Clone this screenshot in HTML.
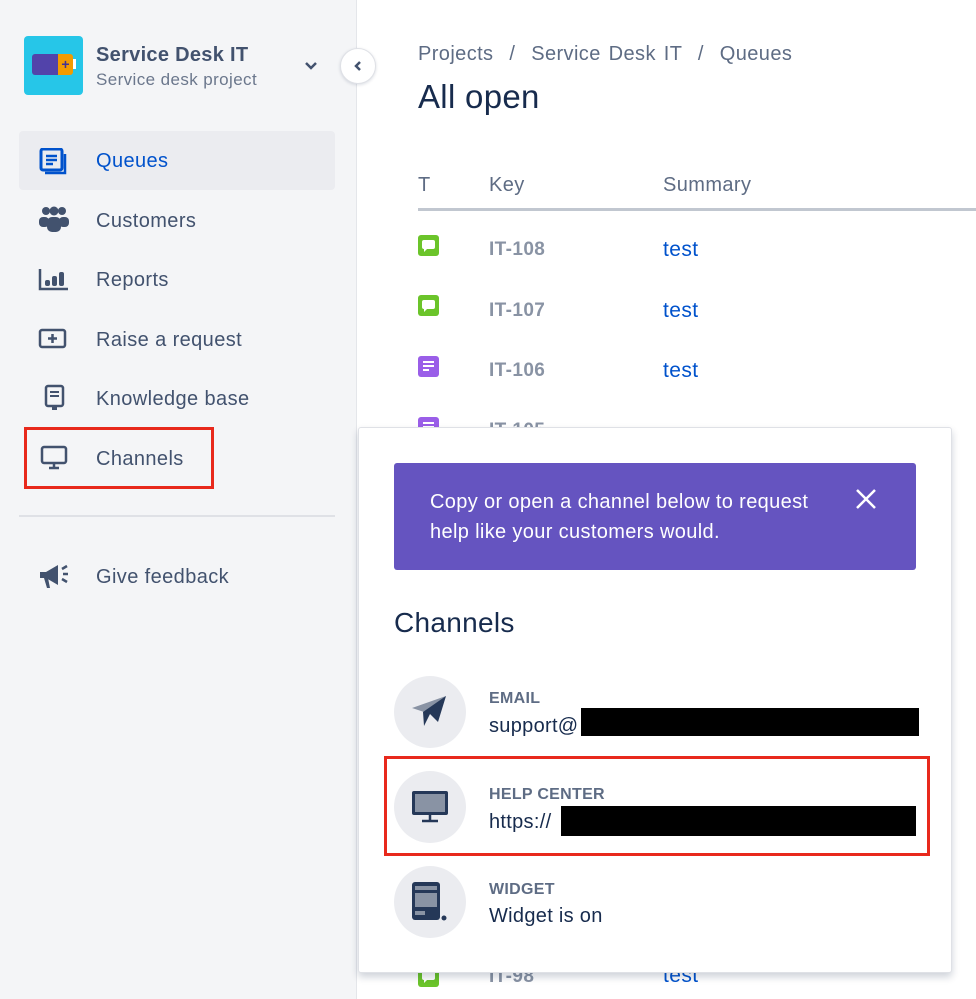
<!DOCTYPE html>
<html><head><style>
*{margin:0;padding:0;box-sizing:border-box}
body{width:976px;height:999px;overflow:hidden;background:#fff;font-family:"Liberation Sans",sans-serif;position:relative;color:#172b4d}
.side{position:absolute;left:0;top:0;width:357px;height:999px;background:#f4f5f7;border-right:1px solid #e4e6ea}
.abs{position:absolute}
.nav{position:absolute;left:96px;font-size:20px;letter-spacing:0.4px;color:#42526e}
.ic{position:absolute;left:38px}
.row .id{position:absolute;left:489px;font-size:19px;letter-spacing:0.4px;color:#8993a4;font-weight:bold}
.t{position:absolute;left:663px;font-size:21px;letter-spacing:0.4px;color:#0052cc}
.lbl{position:absolute;left:489px;font-size:16px;font-weight:bold;color:#5e6c84;letter-spacing:0.3px}
.val{position:absolute;left:489px;font-size:20px;color:#172b4d;letter-spacing:0.3px}
.circ{position:absolute;left:394px;width:72px;height:72px;border-radius:50%;background:#ebecf0}
.sq{position:absolute;left:418px;width:21px;height:21px;border-radius:3px}
</style></head><body>
<div class="side"></div>
<div class="abs" style="left:24px;top:36px;width:59px;height:59px;background:#26c6e8;border-radius:4px">
<div class="abs" style="left:8px;top:18px;width:26px;height:21px;background:#5243aa;border-radius:3px 0 0 3px"></div>
<div class="abs" style="left:34px;top:18px;width:15px;height:21px;background:#f29b00;border-radius:0 3px 3px 0;color:#403294;font-size:14px;font-weight:bold;text-align:center;line-height:20px">+</div>
<div class="abs" style="left:49px;top:23px;width:3px;height:10px;background:#fff"></div>
</div>
<div class="abs" style="left:96px;top:44px;font-size:20px;font-weight:bold;color:#42526e;letter-spacing:0.3px">Service Desk IT</div>
<div class="abs" style="left:96px;top:70px;font-size:17px;color:#6b778c;letter-spacing:0.4px">Service desk project</div>
<svg class="abs" style="left:304px;top:61px" width="14" height="10" viewBox="0 0 14 10"><path d="M2 2l5 5 5-5" fill="none" stroke="#42526e" stroke-width="2.5"/></svg>
<div class="abs" style="left:340px;top:48px;width:36px;height:36px;border-radius:50%;background:#fff;border:1px solid #dfe1e6;box-shadow:0 1px 3px rgba(9,30,66,.15)"></div>
<svg class="abs" style="left:353px;top:60px" width="10" height="12" viewBox="0 0 10 12"><path d="M7 2L3 6l4 4" fill="none" stroke="#42526e" stroke-width="2.5"/></svg>

<div class="abs" style="left:19px;top:131px;width:316px;height:59px;background:#ebecf0;border-radius:4px"></div>
<svg class="ic" style="top:148px" width="30" height="28" viewBox="0 0 30 28"><rect x="3" y="1" width="21" height="21" rx="2" fill="none" stroke="#0052cc" stroke-width="3"/><path d="M8 8h11M8 12h11M8 16h7" stroke="#0052cc" stroke-width="2.5"/><path d="M27 6v19H7" fill="none" stroke="#0052cc" stroke-width="2.5"/></svg>
<div class="nav" style="top:150px;color:#0052cc">Queues</div>
<svg class="ic" style="top:205px" width="32" height="28" viewBox="0 0 32 28"><g fill="#42526e"><circle cx="8" cy="6" r="4"/><circle cx="16" cy="6" r="4.5"/><circle cx="24" cy="6" r="4"/><rect x="1" y="12" width="10" height="10" rx="4"/><rect x="21" y="12" width="10" height="10" rx="4"/><rect x="9" y="12" width="14" height="15" rx="5"/></g></svg>
<div class="nav" style="top:210px">Customers</div>
<svg class="ic" style="top:267px" width="32" height="24" viewBox="0 0 32 24"><path d="M2 2v20h28" fill="none" stroke="#42526e" stroke-width="2.5"/><g fill="#42526e"><rect x="7" y="13" width="5" height="6" rx="2"/><rect x="14" y="9" width="5" height="10" rx="2"/><rect x="21" y="5" width="5" height="14" rx="2"/></g></svg>
<div class="nav" style="top:269px">Reports</div>
<svg class="ic" style="top:328px" width="30" height="22" viewBox="0 0 30 22"><rect x="2" y="2" width="25" height="17" rx="2" fill="none" stroke="#42526e" stroke-width="2.5"/><path d="M14.5 6v9M10 10.5h9" stroke="#42526e" stroke-width="2.5"/></svg>
<div class="nav" style="top:329px">Raise a request</div>
<svg class="ic" style="left:44px;top:384px" width="22" height="28" viewBox="0 0 22 28"><rect x="2" y="2" width="17" height="20" rx="2" fill="none" stroke="#42526e" stroke-width="2.5"/><path d="M6 8h9M6 12h9" stroke="#42526e" stroke-width="2"/><path d="M8 22v4h5v-4" fill="#42526e"/></svg>
<div class="nav" style="top:388px">Knowledge base</div>
<svg class="ic" style="left:40px;top:445px" width="28" height="26" viewBox="0 0 28 26"><rect x="2" y="2" width="24" height="16" rx="2" fill="none" stroke="#42526e" stroke-width="2.5"/><path d="M14 18v4M9 23h10" stroke="#42526e" stroke-width="2.5"/></svg>
<div class="nav" style="top:448px">Channels</div>
<div class="abs" style="left:24px;top:427px;width:190px;height:62px;border:3px solid #e8291c"></div>
<div class="abs" style="left:19px;top:515px;width:316px;height:2px;background:#dfe1e6"></div>
<svg class="ic" style="top:562px" width="32" height="28" viewBox="0 0 32 28"><path d="M2 10h6l12-7v20L8 16H2z" fill="#42526e"/><path d="M6 16l3 10h3l-2-10" fill="#42526e"/><path d="M24 7l5-3M25 12h5M24 17l5 3" stroke="#42526e" stroke-width="2.5"/></svg>
<div class="nav" style="top:566px">Give feedback</div>

<div class="abs" style="left:418px;top:43px;font-size:20px;letter-spacing:0.4px;color:#5e6c84;word-spacing:2px">Projects &nbsp;/ &nbsp;Service Desk IT &nbsp;/ &nbsp;Queues</div>
<div class="abs" style="left:418px;top:78px;font-size:33px;color:#172b4d;letter-spacing:0.3px">All open</div>
<div class="abs" style="left:418px;top:174px;font-size:20px;color:#5e6c84">T</div>
<div class="abs" style="left:489px;top:174px;font-size:20px;color:#5e6c84;letter-spacing:0.4px">Key</div>
<div class="abs" style="left:663px;top:174px;font-size:20px;color:#5e6c84;letter-spacing:0.4px">Summary</div>
<div class="abs" style="left:418px;top:208px;width:558px;height:3px;background:#c1c7d0"></div>
<svg width="0" height="0" style="position:absolute"><defs>
<g id="chat"><path d="M6 5h9a2 2 0 0 1 2 2v5a2 2 0 0 1-2 2H9l-3 3v-3a2 2 0 0 1-2-2V7a2 2 0 0 1 2-2z" fill="#fff"/></g>
<g id="doc"><path d="M5 6h11M5 10h11M5 14h6" stroke="#fff" stroke-width="2"/></g>
</defs></svg>
<div class="row">
<svg class="sq" style="top:235px;background:#6bc42a" viewBox="0 0 21 21"><use href="#chat"/></svg><div class="id" style="top:239px">IT-108</div><div class="t" style="top:238px">test</div>
<svg class="sq" style="top:295px;background:#6bc42a" viewBox="0 0 21 21"><use href="#chat"/></svg><div class="id" style="top:300px">IT-107</div><div class="t" style="top:299px">test</div>
<svg class="sq" style="top:356px;background:#9a5ee8" viewBox="0 0 21 21"><use href="#doc"/></svg><div class="id" style="top:360px">IT-106</div><div class="t" style="top:359px">test</div>
<svg class="sq" style="top:417px;background:#9a5ee8" viewBox="0 0 21 21"><use href="#doc"/></svg><div class="id" style="top:420px">IT-105</div>
<svg class="sq" style="top:966px;background:#6bc42a" viewBox="0 0 21 21"><use href="#chat"/></svg><div class="id" style="top:966px">IT-98</div><div class="t" style="top:964px">test</div>
</div>

<div class="abs" style="left:358px;top:427px;width:594px;height:546px;background:#fff;border:1px solid #dfe1e6;box-shadow:0 4px 8px rgba(9,30,66,.2);border-radius:3px"></div>
<div class="abs" style="left:394px;top:463px;width:522px;height:107px;background:#6554c0;border-radius:3px;color:#fff;font-size:20px;letter-spacing:0.35px;line-height:30px;padding:24px 85px 24px 36px">Copy or open a channel below to request help like your customers would.</div>
<svg class="abs" style="left:854px;top:487px" width="24" height="24" viewBox="0 0 24 24"><path d="M3 3l18 18M21 3L3 21" stroke="#fff" stroke-width="2.5"/></svg>
<div class="abs" style="left:394px;top:607px;font-size:28px;color:#172b4d;letter-spacing:0.3px">Channels</div>

<div class="circ" style="top:676px"></div>
<svg class="abs" style="left:410px;top:694px" width="40" height="36" viewBox="0 0 40 36"><path d="M2 14L36 2 20 20z" fill="#8993a4"/><path d="M36 2L28 28 20 20 14 32 13 18z" fill="#253858"/></svg>
<div class="lbl" style="top:690px">EMAIL</div>
<div class="val" style="top:715px">support@</div>
<div class="abs" style="left:581px;top:708px;width:338px;height:28px;background:#000"></div>

<div class="abs" style="left:384px;top:756px;width:546px;height:100px;border:3px solid #e8291c"></div>
<div class="circ" style="top:771px"></div>
<svg class="abs" style="left:411px;top:790px" width="38" height="34" viewBox="0 0 38 34"><rect x="1" y="1" width="36" height="24" rx="2" fill="#253858"/><rect x="4" y="4" width="30" height="18" fill="#8993a4"/><path d="M19 25v5M11 31h16" stroke="#253858" stroke-width="2.5"/></svg>
<div class="lbl" style="top:786px">HELP CENTER</div>
<div class="val" style="top:811px">https://</div>
<div class="abs" style="left:561px;top:806px;width:355px;height:30px;background:#000"></div>

<div class="circ" style="top:866px"></div>
<svg class="abs" style="left:412px;top:882px" width="36" height="40" viewBox="0 0 36 40"><rect x="0" y="0" width="28" height="38" rx="3" fill="#253858"/><rect x="3" y="4" width="22" height="4" fill="#8993a4"/><rect x="3" y="11" width="22" height="14" fill="#8993a4"/><rect x="3" y="29" width="10" height="4" fill="#8993a4"/><circle cx="32" cy="36" r="2.5" fill="#253858"/></svg>
<div class="lbl" style="top:881px">WIDGET</div>
<div class="val" style="top:905px">Widget is on</div>
</body></html>
